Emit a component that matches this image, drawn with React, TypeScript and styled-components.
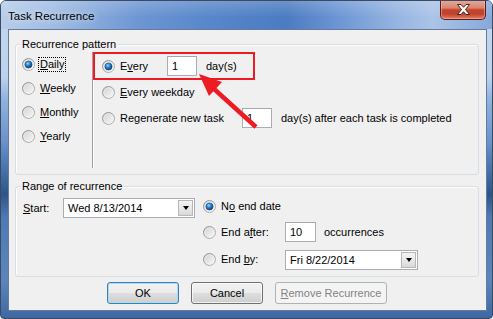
import styled, { createGlobalStyle } from 'styled-components';

const GlobalStyle = createGlobalStyle`
  html, body {
    margin: 0;
    padding: 0;
    background: #ffffff;
  }
  body {
    font-family: 'Liberation Sans', Arial, sans-serif;
    font-size: 11px;
    color: #000;
  }
`;

const Window = styled.div`
  position: relative;
  width: 493px;
  height: 319px;
  box-sizing: border-box;
  display: flex;
  flex-direction: column;
  border: 1px solid #3a4a62;
  border-radius: 6px 6px 4px 4px;
  overflow: hidden;
  background: linear-gradient(
    180deg,
    #c4d7ee 0%,
    #bdd2ec 24%,
    #90b2df 31%,
    #6b93cd 44%,
    #3c679f 56%,
    #2c5488 61%,
    #4f79b3 68%,
    #5d85bd 88%,
    #3d68a3 100%
  );
`;

const TitleBar = styled.div`
  height: 28px;
  display: flex;
  align-items: flex-start;
  padding-left: 7px;
  background:
    linear-gradient(180deg, rgba(255, 255, 255, 0.18) 0%, rgba(255, 255, 255, 0) 60%),
    linear-gradient(
      90deg,
      #b8cdea 0%,
      #a2bde4 10%,
      #6d96d2 28%,
      #5887ca 42%,
      #4b7bc1 58%,
      #6a94d2 68%,
      #93b3e0 80%,
      #abc4e7 88%,
      #86a8da 100%
    );
`;

const TitleText = styled.span`
  margin-top: 8px;
  font-size: 11.5px;
  line-height: 14px;
  color: #000;
  text-shadow: 0 0 6px rgba(255, 255, 255, 0.9);
`;

const CloseButton = styled.div`
  margin-left: auto;
  margin-right: 6px;
  margin-top: -1px;
  width: 46px;
  height: 20px;
  box-sizing: border-box;
  display: flex;
  align-items: center;
  justify-content: center;
  border: 1px solid #5a1c12;
  border-top: none;
  border-radius: 0 0 5px 5px;
  box-shadow: inset 0 0 0 1px rgba(255, 200, 190, 0.45);
  background: linear-gradient(
    180deg,
    #e6ab9c 0%,
    #d9846f 42%,
    #c4432d 52%,
    #c3422c 74%,
    #df8068 100%
  );
`;

const Client = styled.div`
  flex: 1;
  margin: 0 5px 7px 7px;
  box-sizing: border-box;
  border: 1px solid #677b96;
  background: #f0f0f0;
  display: flex;
  flex-direction: column;
  padding: 0 7px 0 6px;
`;

const GroupBox = styled.div<{ $height: number; $top: number }>`
  position: relative;
  margin-top: ${(p) => p.$top}px;
  height: ${(p) => p.$height}px;
  box-sizing: border-box;
  border: 1px solid #d5dfe5;
  border-radius: 3px;
  box-shadow: inset 1px 1px 0 #fff;
  display: flex;
`;

const GroupTitle = styled.span`
  position: absolute;
  top: -8px;
  left: 5px;
  padding: 0 2px 0 1px;
  line-height: 14px;
  background: #f0f0f0;
`;

const Column = styled.div<{ $width?: number; $padLeft: number; $padTop: number }>`
  display: flex;
  flex-direction: column;
  box-sizing: border-box;
  ${(p) => (p.$width ? `width: ${p.$width}px;` : '')}
  padding-left: ${(p) => p.$padLeft}px;
  padding-top: ${(p) => p.$padTop}px;
`;

const Divider = styled.div`
  width: 0;
  margin: 7px 0 6px;
  border-left: 1px solid #a0a0a0;
  border-right: 1px solid #ffffff;
`;

const Row = styled.div<{ $height: number }>`
  height: ${(p) => p.$height}px;
  display: flex;
  align-items: center;
  white-space: nowrap;
`;

const RadioBox = styled.svg`
  flex: none;
  width: 13px;
  height: 13px;
  margin-right: 3px;
`;

const Label = styled.span<{ $width?: number; $focused?: boolean }>`
  display: inline-block;
  box-sizing: border-box;
  ${(p) => (p.$width ? `width: ${p.$width}px;` : '')}
  line-height: 13px;
  padding: 0 1px;
  border: 1px dotted ${(p) => (p.$focused ? '#000' : 'transparent')};
`;

const Plain = styled.span<{ $gap: number }>`
  margin-left: ${(p) => p.$gap}px;
`;

const TextBox = styled.div<{ $width: number }>`
  width: ${(p) => p.$width}px;
  height: 20px;
  box-sizing: border-box;
  border: 1px solid #abadb3;
  border-top-color: #a3a6ad;
  background: #fff;
  padding-left: 4px;
  line-height: 18px;
`;

const Combo = styled.div<{ $width: number }>`
  width: ${(p) => p.$width}px;
  height: 20px;
  box-sizing: border-box;
  border: 1px solid #abadb3;
  background: #fff;
  display: flex;
  align-items: stretch;
  padding: 1px;
`;

const ComboValue = styled.span`
  flex: 1;
  padding-left: 3px;
  line-height: 16px;
`;

const DropButton = styled.div`
  width: 15px;
  box-sizing: border-box;
  border: 1px solid #b8b8b8;
  background: linear-gradient(180deg, #f4f4f4 0%, #e8e8e8 50%, #d9d9d9 100%);
  display: flex;
  align-items: center;
  justify-content: center;
`;

const Triangle = styled.span`
  width: 0;
  height: 0;
  border-left: 3.5px solid transparent;
  border-right: 3.5px solid transparent;
  border-top: 4px solid #000;
`;

const ButtonBar = styled.div`
  margin-top: 5px;
  display: flex;
  justify-content: center;
  gap: 12px;
`;

const DialogButton = styled.div<{ $width: number; $variant?: 'default' | 'disabled' }>`
  width: ${(p) => p.$width}px;
  height: 22px;
  box-sizing: border-box;
  border-radius: 3px;
  display: flex;
  align-items: center;
  justify-content: center;
  border: 1px solid
    ${(p) => (p.$variant === 'default' ? '#3c7fb1' : p.$variant === 'disabled' ? '#adb2b5' : '#707070')};
  color: ${(p) => (p.$variant === 'disabled' ? '#838383' : '#000')};
  background: ${(p) =>
    p.$variant === 'disabled'
      ? '#f4f4f4'
      : 'linear-gradient(180deg, #f2f2f2 0%, #ebebeb 48%, #dddddd 52%, #cfcfcf 100%)'};
  box-shadow: ${(p) =>
    p.$variant === 'default'
      ? 'inset 0 0 0 1px #a6dcf6'
      : p.$variant === 'disabled'
        ? 'none'
        : 'inset 0 0 0 1px rgba(255,255,255,0.7)'};
`;

const Highlight = styled.div`
  position: absolute;
  left: 92px;
  top: 51px;
  width: 162px;
  height: 28px;
  box-sizing: border-box;
  border: 2px solid #ed1c24;
  pointer-events: none;
`;

const ArrowLayer = styled.svg`
  position: absolute;
  left: -1px;
  top: -1px;
  width: 493px;
  height: 319px;
  pointer-events: none;
`;

const Radio = ({ checked = false }: { checked?: boolean }) => (
  <RadioBox viewBox="0 0 13 13">
    <defs>
      <linearGradient id="ring" x1="0" y1="0" x2="1" y2="1">
        <stop offset="0" stopColor="#8a8a8a" />
        <stop offset="1" stopColor="#b9b9b9" />
      </linearGradient>
      <linearGradient id="well" x1="0" y1="0" x2="1" y2="1">
        <stop offset="0" stopColor="#cfcfcf" />
        <stop offset="1" stopColor="#fbfbfb" />
      </linearGradient>
      <radialGradient id="dot" cx="0.4" cy="0.35" r="0.65">
        <stop offset="0" stopColor="#8fdcff" />
        <stop offset="0.45" stopColor="#2a86d2" />
        <stop offset="1" stopColor="#0d3a6e" />
      </radialGradient>
    </defs>
    <circle cx="6.5" cy="6.5" r="6" fill="url(#well)" stroke="url(#ring)" strokeWidth="1" />
    <circle cx="6.5" cy="6.5" r="4.6" fill="none" stroke="#f4f4f4" strokeWidth="0.8" opacity="0.6" />
    {checked && <circle cx="6.5" cy="6.5" r="3.6" fill="url(#dot)" stroke="#1b3f6b" strokeWidth="0.5" />}
  </RadioBox>
);

const App = () => {
  return (
    <>
      <GlobalStyle />
      <Window>
        <TitleBar>
          <TitleText>Task Recurrence</TitleText>
          <CloseButton>
            <svg width="13" height="11" viewBox="0 0 13 11">
              <polygon
                points="0.5,0.5 4,0.5 6.5,3.3 9,0.5 12.5,0.5 8.5,5.5 12.5,10.5 9,10.5 6.5,7.7 4,10.5 0.5,10.5 4.5,5.5"
                fill="#ffffff"
                stroke="#3d120a"
                strokeWidth="0.9"
                strokeLinejoin="round"
              />
            </svg>
          </CloseButton>
        </TitleBar>

        <Client>
          <GroupBox $top={14} $height={131}>
            <GroupTitle>Recurrence pattern</GroupTitle>
            <Column $width={76} $padLeft={6} $padTop={7}>
              <Row $height={24}>
                <Radio checked />
                <Label $focused>
                  <u>D</u>aily
                </Label>
              </Row>
              <Row $height={24}>
                <Radio />
                <Label>
                  <u>W</u>eekly
                </Label>
              </Row>
              <Row $height={24}>
                <Radio />
                <Label>
                  <u>M</u>onthly
                </Label>
              </Row>
              <Row $height={24}>
                <Radio />
                <Label>
                  <u>Y</u>early
                </Label>
              </Row>
            </Column>
            <Divider />
            <Column $padLeft={8} $padTop={8}>
              <Row $height={26}>
                <Radio checked />
                <Label $width={49}>
                  E<u>v</u>ery
                </Label>
                <TextBox $width={30}>1</TextBox>
                <Plain $gap={9}>day(s)</Plain>
              </Row>
              <Row $height={26}>
                <Radio />
                <Label>
                  <u>E</u>very weekday
                </Label>
              </Row>
              <Row $height={26}>
                <Radio />
                <Label $width={124}>
                  Re<u>g</u>enerate new task
                </Label>
                <TextBox $width={30}>1</TextBox>
                <Plain $gap={9}>day(s) after each task is completed</Plain>
              </Row>
            </Column>
          </GroupBox>

          <GroupBox $top={11} $height={91}>
            <GroupTitle>Range of recurrence</GroupTitle>
            <Column $padLeft={5} $padTop={11}>
              <Row $height={20}>
                <Label $width={42}>
                  <u>S</u>tart:
                </Label>
                <Combo $width={132}>
                  <ComboValue>Wed 8/13/2014</ComboValue>
                  <DropButton>
                    <Triangle />
                  </DropButton>
                </Combo>
              </Row>
            </Column>
            <Column $padLeft={8} $padTop={6}>
              <Row $height={26}>
                <Radio checked />
                <Label>
                  N<u>o</u> end date
                </Label>
              </Row>
              <Row $height={26}>
                <Radio />
                <Label $width={66}>
                  End a<u>f</u>ter:
                </Label>
                <TextBox $width={31}>10</TextBox>
                <Plain $gap={8}>occurrences</Plain>
              </Row>
              <Row $height={29}>
                <Radio />
                <Label $width={66}>
                  End <u>b</u>y:
                </Label>
                <Combo $width={133}>
                  <ComboValue>Fri 8/22/2014</ComboValue>
                  <DropButton>
                    <Triangle />
                  </DropButton>
                </Combo>
              </Row>
            </Column>
          </GroupBox>

          <ButtonBar>
            <DialogButton $width={72} $variant="default">
              OK
            </DialogButton>
            <DialogButton $width={72}>Cancel</DialogButton>
            <DialogButton $width={112} $variant="disabled">
              <span>
                <u>R</u>emove Recurrence
              </span>
            </DialogButton>
          </ButtonBar>
        </Client>

        <Highlight />
        <ArrowLayer viewBox="0 0 493 319">
          <line x1="256" y1="127" x2="213" y2="88" stroke="#ed1c24" strokeWidth="4.5" />
          <polygon points="199,74 222,82 209,96" fill="#ed1c24" />
        </ArrowLayer>
      </Window>
    </>
  );
};

export default App;
